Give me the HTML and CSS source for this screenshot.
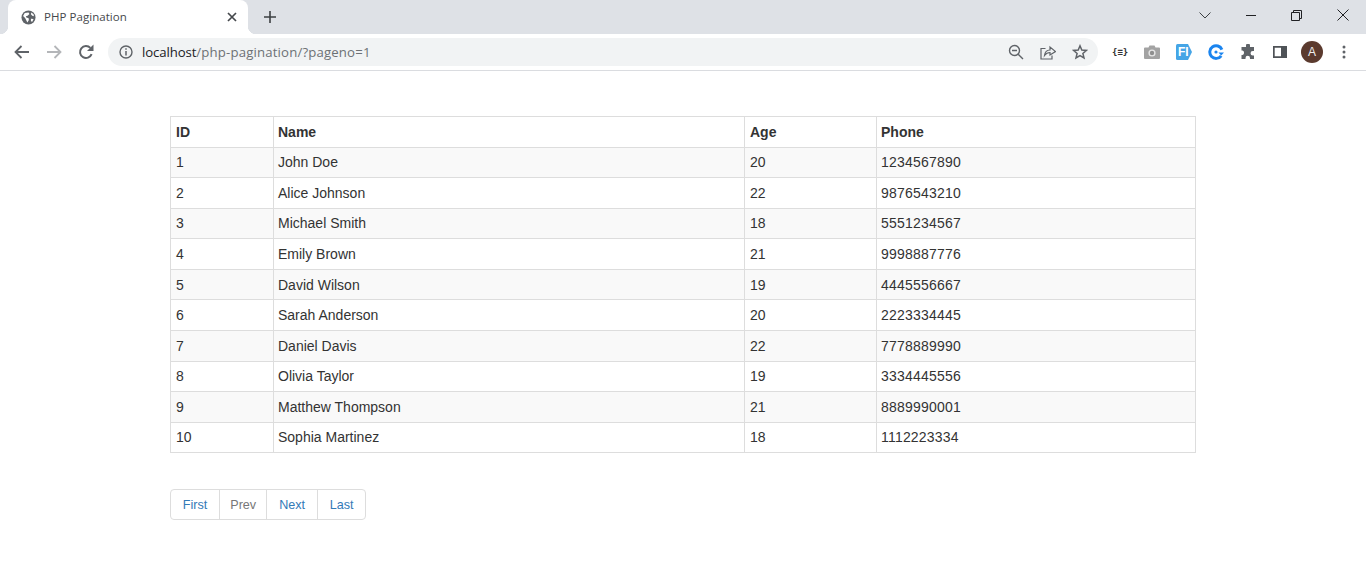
FILE: index.html
```html
<!DOCTYPE html>
<html lang="en">

<head>
  <meta charset="UTF-8" />
  <title>PHP Pagination</title>
  <link rel="stylesheet" href="styles.css">
</head>

<body>

  <div class="tabbar">
    <div class="tab">
      <svg class="favicon" width="15" height="15" viewBox="0 0 16 16">
        <circle cx="8" cy="8" r="7.5" fill="#5f6368" />
        <path d="M4 3.2 L8 2.6 L9 4.2 L7 6.2 L5.2 6.6 L6 8.2 L8 8.6 L8.4 10.6 L6.8 13.4 L5.6 10.8 L4.4 8.4 L2.2 6.4Z M11 2.6 L13.4 4.6 L13.8 6.6 L12 6.2 L10.6 4.4Z M10.6 9.2 L13.4 9.6 L12 12.4 L10.6 12Z" fill="#fff" />
      </svg>
      <span class="tab-title">PHP Pagination</span>
      <svg class="tab-close" width="10" height="10" viewBox="0 0 10 10">
        <path d="M1 1 L9 9 M9 1 L1 9" stroke="#45484c" stroke-width="1.7" fill="none" />
      </svg>
    </div>
    <svg class="new-tab" width="12" height="12" viewBox="0 0 12 12">
      <path d="M6 0 V12 M0 6 H12" stroke="#3c4043" stroke-width="1.6" fill="none" />
    </svg>
    <div class="win-controls">
      <svg class="win-icon win-chevron" width="12" height="7" viewBox="0 0 12 7">
        <path d="M0.5 0.5 L6 6 L11.5 0.5" stroke="#3c4043" stroke-width="1" fill="none" />
      </svg>
      <svg class="win-icon win-min" width="10" height="1" viewBox="0 0 10 1">
        <path d="M0 0.5 H10" stroke="#202124" stroke-width="1" />
      </svg>
      <svg class="win-icon win-restore" width="11" height="11" viewBox="0 0 11 11">
        <path d="M0.5 2.5 H8.5 V10.5 H0.5Z M2.5 2.5 V0.5 H10.5 V8.5 H8.5" stroke="#202124" stroke-width="1" fill="none" />
      </svg>
      <svg class="win-icon win-close" width="12" height="12" viewBox="0 0 12 12">
        <path d="M0.5 0.5 L11.5 11.5 M11.5 0.5 L0.5 11.5" stroke="#202124" stroke-width="1" fill="none" />
      </svg>
    </div>
  </div>

  <div class="toolbar">
    <svg class="nav-icon" width="16" height="14" viewBox="0 0 16 14">
      <path d="M15 7 H2 M7.5 1 L1.5 7 L7.5 13" stroke="#5f6368" stroke-width="1.8" fill="none" />
    </svg>
    <svg class="nav-icon nav-forward" width="16" height="14" viewBox="0 0 16 14">
      <path d="M1 7 H14 M8.5 1 L14.5 7 L8.5 13" stroke="#b4b6b9" stroke-width="1.8" fill="none" />
    </svg>
    <svg class="nav-icon nav-reload" width="16" height="16" viewBox="0 0 16 16">
      <path d="M13.6 10.2 A6 6 0 1 1 12.4 3.9" stroke="#5f6368" stroke-width="2" fill="none" />
      <path d="M9 7 H15.5 V0.5Z" fill="#5f6368" />
    </svg>
    <div class="omnibox">
      <svg class="info-icon" width="14" height="14" viewBox="0 0 14 14">
        <circle cx="7" cy="7" r="6" stroke="#5f6368" stroke-width="1.4" fill="none" />
        <path d="M7 6 V10.5 M7 3.3 V4.8" stroke="#5f6368" stroke-width="1.5" />
      </svg>
      <span class="url"><span class="url-host">localhost</span>/php-pagination/?pageno=1</span>
      <svg class="omni-icon" width="16" height="16" viewBox="0 0 16 16">
        <circle cx="6.5" cy="6.5" r="5" stroke="#5f6368" stroke-width="1.4" fill="none" />
        <path d="M10.2 10.2 L15 15 M4 6.5 H9" stroke="#5f6368" stroke-width="1.4" fill="none" />
      </svg>
      <svg class="omni-icon" width="16" height="16" viewBox="0 0 16 16">
        <path d="M5.5 4.5 H1 V15 H12 V11.5" stroke="#5f6368" stroke-width="1.2" fill="none" />
        <path d="M4.5 11.5 C5 7.5 7.5 6 10 6 V3 L15.5 7.5 L10 11 V8.5 C8 8.5 6 9.5 4.5 11.5Z" stroke="#5f6368" stroke-width="1.2" fill="none" />
      </svg>
      <svg class="omni-icon" width="16" height="16" viewBox="0 0 16 16">
        <path d="M8 1.8 L9.8 6 L14.4 6.4 L10.9 9.4 L12 13.9 L8 11.5 L4 13.9 L5.1 9.4 L1.6 6.4 L6.2 6Z" stroke="#5f6368" stroke-width="1.5" fill="none" />
      </svg>
    </div>
    <div class="extensions">
      <span class="ext-json">{≡}</span>
      <svg width="16" height="14" viewBox="0 0 16 14">
        <path d="M1 2.5 H4.5 L5.5 0.5 H10.5 L11.5 2.5 H15 Q16 2.5 16 3.5 V13 Q16 14 15 14 H1 Q0 14 0 13 V3.5 Q0 2.5 1 2.5Z" fill="#a3a3a3" />
        <circle cx="8" cy="8" r="3.6" fill="#e6e6e6" />
        <circle cx="8" cy="8" r="2.2" fill="#8f8f8f" />
      </svg>
      <div class="ext-fi">
        <svg width="16" height="16" viewBox="0 0 16 16">
          <path d="M1.5 0 H12 L16 8 L12 16 H1.5 Q0 16 0 14.5 V1.5 Q0 0 1.5 0Z" fill="#45a5e6" />
        </svg>
        <span class="ext-fi-label">FI</span>
      </div>
      <svg width="16" height="16" viewBox="0 0 16 16">
        <path d="M13.2 11.8 A6.3 6.3 0 1 1 13.9 5.6" stroke="#1a84ef" stroke-width="3" fill="none" />
        <circle cx="8" cy="8" r="1.6" fill="#1a84ef" />
        <path d="M10.5 8.5 H16 L13.2 11.5Z" fill="#1a84ef" />
      </svg>
      <svg width="16" height="16" viewBox="0 0 16 16">
        <path d="M6 1.5 A2 2 0 0 1 10 1.5 V3 H14 V7 H12.8 A2.2 2.2 0 0 0 12.8 11.5 H14 V15 H10 V14 A2.2 2.2 0 0 0 5.5 14 V15 H1.5 V11 H2.5 A2.4 2.4 0 0 0 2.5 6.5 H1.5 V3 H6Z" fill="#5f6368" />
      </svg>
      <svg class="ext-panel" width="14" height="12" viewBox="0 0 14 12">
        <path d="M0 0 H14 V12 H0Z M1.7 1.7 V10.3 H8 V1.7Z" fill="#4f5357" fill-rule="evenodd" />
      </svg>
      <div class="avatar">A</div>
      <svg class="kebab" width="4" height="14" viewBox="0 0 4 14">
        <circle cx="2" cy="2" r="1.5" fill="#5f6368" />
        <circle cx="2" cy="7" r="1.5" fill="#5f6368" />
        <circle cx="2" cy="12" r="1.5" fill="#5f6368" />
      </svg>
    </div>
  </div>

  <div class="container">
    <table class="data-table">
      <thead>
        <tr>
          <th class="col-id">ID</th>
          <th class="col-name">Name</th>
          <th class="col-age">Age</th>
          <th class="col-phone">Phone</th>
        </tr>
      </thead>
      <tbody>
        <tr><td>1</td><td class="cell-name">John Doe</td><td>20</td><td class="cell-phone">1234567890</td></tr>
        <tr><td>2</td><td class="cell-name">Alice Johnson</td><td>22</td><td class="cell-phone">9876543210</td></tr>
        <tr><td>3</td><td class="cell-name">Michael Smith</td><td>18</td><td class="cell-phone">5551234567</td></tr>
        <tr><td>4</td><td class="cell-name">Emily Brown</td><td>21</td><td class="cell-phone">9998887776</td></tr>
        <tr><td>5</td><td class="cell-name">David Wilson</td><td>19</td><td class="cell-phone">4445556667</td></tr>
        <tr><td>6</td><td class="cell-name">Sarah Anderson</td><td>20</td><td class="cell-phone">2223334445</td></tr>
        <tr><td>7</td><td class="cell-name">Daniel Davis</td><td>22</td><td class="cell-phone">7778889990</td></tr>
        <tr><td>8</td><td class="cell-name">Olivia Taylor</td><td>19</td><td class="cell-phone">3334445556</td></tr>
        <tr><td>9</td><td class="cell-name">Matthew Thompson</td><td>21</td><td class="cell-phone">8889990001</td></tr>
        <tr><td>10</td><td class="cell-name">Sophia Martinez</td><td>18</td><td class="cell-phone">1112223334</td></tr>
      </tbody>
    </table>

    <ul class="pagination">
      <li><a href="#">First</a></li>
      <li class="disabled"><a href="#">Prev</a></li>
      <li><a href="#">Next</a></li>
      <li><a href="#">Last</a></li>
    </ul>
  </div>

</body>

</html>
```

FILE: styles.css
```css
* {
  box-sizing: border-box;
}
body {
  margin: 0;
  font-family: "Liberation Sans", Arial, sans-serif;
  color: #333;
  background: #fff;
}

/* browser chrome */
.tabbar {
  display: flex;
  align-items: center;
  height: 34px;
  padding-left: 8px;
  background: #dee1e6;
}
.tab {
  position: relative;
  display: flex;
  align-items: center;
  width: 240px;
  height: 34px;
  padding: 0 11px 0 13px;
  background: #fff;
  border-radius: 8px 8px 0 0;
}
.tab::before,
.tab::after {
  content: "";
  position: absolute;
  bottom: 0;
  width: 8px;
  height: 8px;
}
.tab::before {
  left: -8px;
  background: radial-gradient(circle at 0 0, transparent 8px, #fff 8.5px);
}
.tab::after {
  right: -8px;
  background: radial-gradient(circle at 100% 0, transparent 8px, #fff 8.5px);
}
.tab-title {
  flex: 1;
  margin-left: 8px;
  padding-bottom: 2px;
  font-family: "Open Sans", sans-serif;
  font-size: 11.5px;
  letter-spacing: 0.05px;
  color: #45484c;
}
.new-tab {
  margin-left: 16px;
}
.win-controls {
  display: flex;
  align-items: center;
  align-self: flex-start;
  margin-left: auto;
  height: 30px;
}
.win-chevron {
  margin-right: 35px;
}
.win-min {
  margin-right: 35px;
}
.win-restore {
  margin-right: 35px;
}
.win-close {
  margin-right: 17px;
}
.toolbar {
  display: flex;
  align-items: center;
  height: 37px;
  padding: 0 14px 1px 14px;
  background: #fff;
  border-bottom: 1px solid #dadce0;
}
.nav-icon {
  margin-right: 16px;
}
.nav-reload {
  margin-right: 14px;
}
.omnibox {
  display: flex;
  align-items: center;
  width: 990px;
  height: 28px;
  padding: 0 10px 0 11px;
  background: #f1f3f4;
  border-radius: 14px;
}
.url {
  flex: 1;
  margin-left: 9px;
  font-family: "Open Sans", sans-serif;
  font-size: 13.2px;
  letter-spacing: 0.16px;
  color: #6d7175;
}
.url-host {
  letter-spacing: -0.1px;
  color: #202124;
}
.omni-icon {
  margin-left: 16px;
}
.extensions {
  display: flex;
  align-items: center;
  gap: 16px;
  margin-left: 14px;
}
.ext-json {
  width: 16px;
  font-family: "DejaVu Sans Mono", monospace;
  font-size: 9px;
  font-weight: bold;
  text-align: center;
  color: #333;
}
.ext-fi {
  position: relative;
  width: 16px;
  height: 16px;
}
.ext-fi-label {
  position: absolute;
  top: 0;
  left: 2px;
  font-size: 12px;
  font-weight: bold;
  line-height: 16px;
  color: #fff;
}
.ext-panel {
  margin-left: 1px;
}
.avatar {
  width: 22px;
  height: 22px;
  margin-left: -2px;
  border-radius: 50%;
  background: #5b3a2e;
  font-size: 12px;
  line-height: 22px;
  text-align: center;
  color: #eee;
}
.kebab {
  margin-left: 3px;
}

/* page */
.container {
  padding: 45px 170px 0;
}
.data-table {
  width: 1026px;
  border-collapse: collapse;
  table-layout: fixed;
  font-size: 14px;
}
.data-table th,
.data-table td {
  height: 30.57px;
  padding: 0 5px;
  border: 1px solid #ddd;
  text-align: left;
}
.data-table .col-name,
.data-table .cell-name {
  padding-left: 4px;
}
.data-table .col-phone,
.data-table .cell-phone {
  padding-left: 4px;
}
.data-table .cell-phone {
  letter-spacing: 0.2px;
}
.data-table tbody tr:nth-child(odd) {
  background: #f9f9f9;
}
.col-id {
  width: 103px;
}
.col-name {
  width: 471px;
}
.col-age {
  width: 132px;
}
.pagination {
  display: inline-flex;
  margin: 36px 0 0;
  padding: 0;
  list-style: none;
  border: 1px solid #ddd;
  border-radius: 4px;
  font-size: 12.6px;
}
.pagination li + li {
  border-left: 1px solid #ddd;
}
.pagination a {
  display: block;
  height: 29px;
  padding: 0 11.8px;
  line-height: 30px;
  color: #337ab7;
  text-decoration: none;
}
.pagination .disabled a {
  padding: 0 10.2px;
  color: #777;
}
```
